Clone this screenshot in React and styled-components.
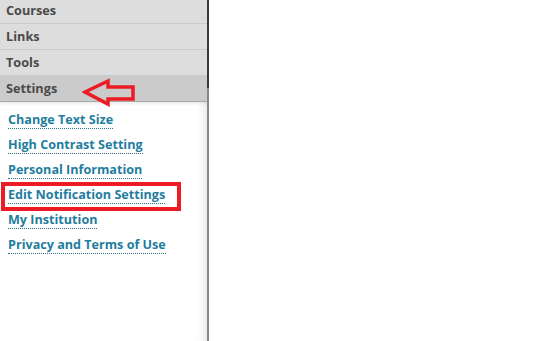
import React from 'react';
import styled, { createGlobalStyle } from 'styled-components';

const GlobalStyle = createGlobalStyle`
  html, body {
    margin: 0;
    padding: 0;
    background: #ffffff;
  }
  body {
    font-family: "Open Sans", "Liberation Sans", sans-serif;
  }
`;

const Page = styled.div`
  display: flex;
  width: 534px;
  height: 341px;
  overflow: hidden;
  background: #ffffff;
`;

const Sidebar = styled.aside`
  width: 207px;
  flex-shrink: 0;
  display: flex;
  flex-direction: column;
  border-right: 2px solid #8a8a8a;
  border-image: linear-gradient(to bottom, #3a3a3a 0, #3a3a3a 88px, #8a8a8a 88px) 1;
  box-shadow: inset -10px 0 10px -8px rgba(0, 0, 0, 0.12);
`;

const Menu = styled.ul`
  list-style: none;
  margin: -2px 0 0;
  padding: 0;
`;

const MenuItem = styled.li`
  position: relative;
  height: 25px;
  line-height: 25px;
  padding-left: 6px;
  font-size: 12.7px;
  font-weight: 700;
  color: #4a4a4a;
  background: ${p => (p.$active ? '#cbcbcb' : '#dddddd')};
  border-bottom: 1px solid ${p => (p.$active ? '#a9a9a9' : '#c9c9c9')};
  box-shadow: ${p => (p.$active ? '0 2px 3px rgba(0,0,0,0.08)' : 'none')};
`;

const Arrow = styled.svg`
  position: absolute;
  left: 82px;
  top: 2px;
  width: 55px;
  height: 30px;
`;

const Links = styled.ul`
  list-style: none;
  margin: 0;
  padding: 4px 0 0;
`;

const LinkItem = styled.li`
  position: relative;
  height: 25px;
  line-height: 25px;
  padding-left: 8px;

  ${p =>
    p.$marked &&
    `
    &::after {
      content: '';
      position: absolute;
      left: 1px;
      top: 1px;
      width: 172px;
      height: 21px;
      border: 4px solid #ed1c24;
    }
  `}
`;

const Link = styled.a`
  font-size: 12.6px;
  font-weight: 700;
  color: #1f7d9e;
  text-decoration: none;
  border-bottom: 1px dotted #2a6f80;
`;

const Main = styled.main`
  flex: 1;
  background: #ffffff;
`;

const menu = ['Courses', 'Links', 'Tools'];

const settingsLinks = [
  'Change Text Size',
  'High Contrast Setting',
  'Personal Information',
  'Edit Notification Settings',
  'My Institution',
  'Privacy and Terms of Use',
];

const App = () => {
  return (
    <>
      <GlobalStyle />
      <Page>
        <Sidebar>
          <Menu>
            {menu.map(item => (
              <MenuItem key={item}>{item}</MenuItem>
            ))}
            <MenuItem $active>
              Settings
              <Arrow viewBox="0 0 55 30">
                <polygon
                  points="3,14 26,3 26,9 51,9 51,21 26,21 26,26"
                  fill="none"
                  stroke="#ed1c24"
                  strokeWidth="3.5"
                />
              </Arrow>
            </MenuItem>
          </Menu>
          <Links>
            {settingsLinks.map(label => (
              <LinkItem key={label} $marked={label === 'Edit Notification Settings'}>
                <Link href="#">{label}</Link>
              </LinkItem>
            ))}
          </Links>
        </Sidebar>
        <Main />
      </Page>
    </>
  );
};

export default App;
